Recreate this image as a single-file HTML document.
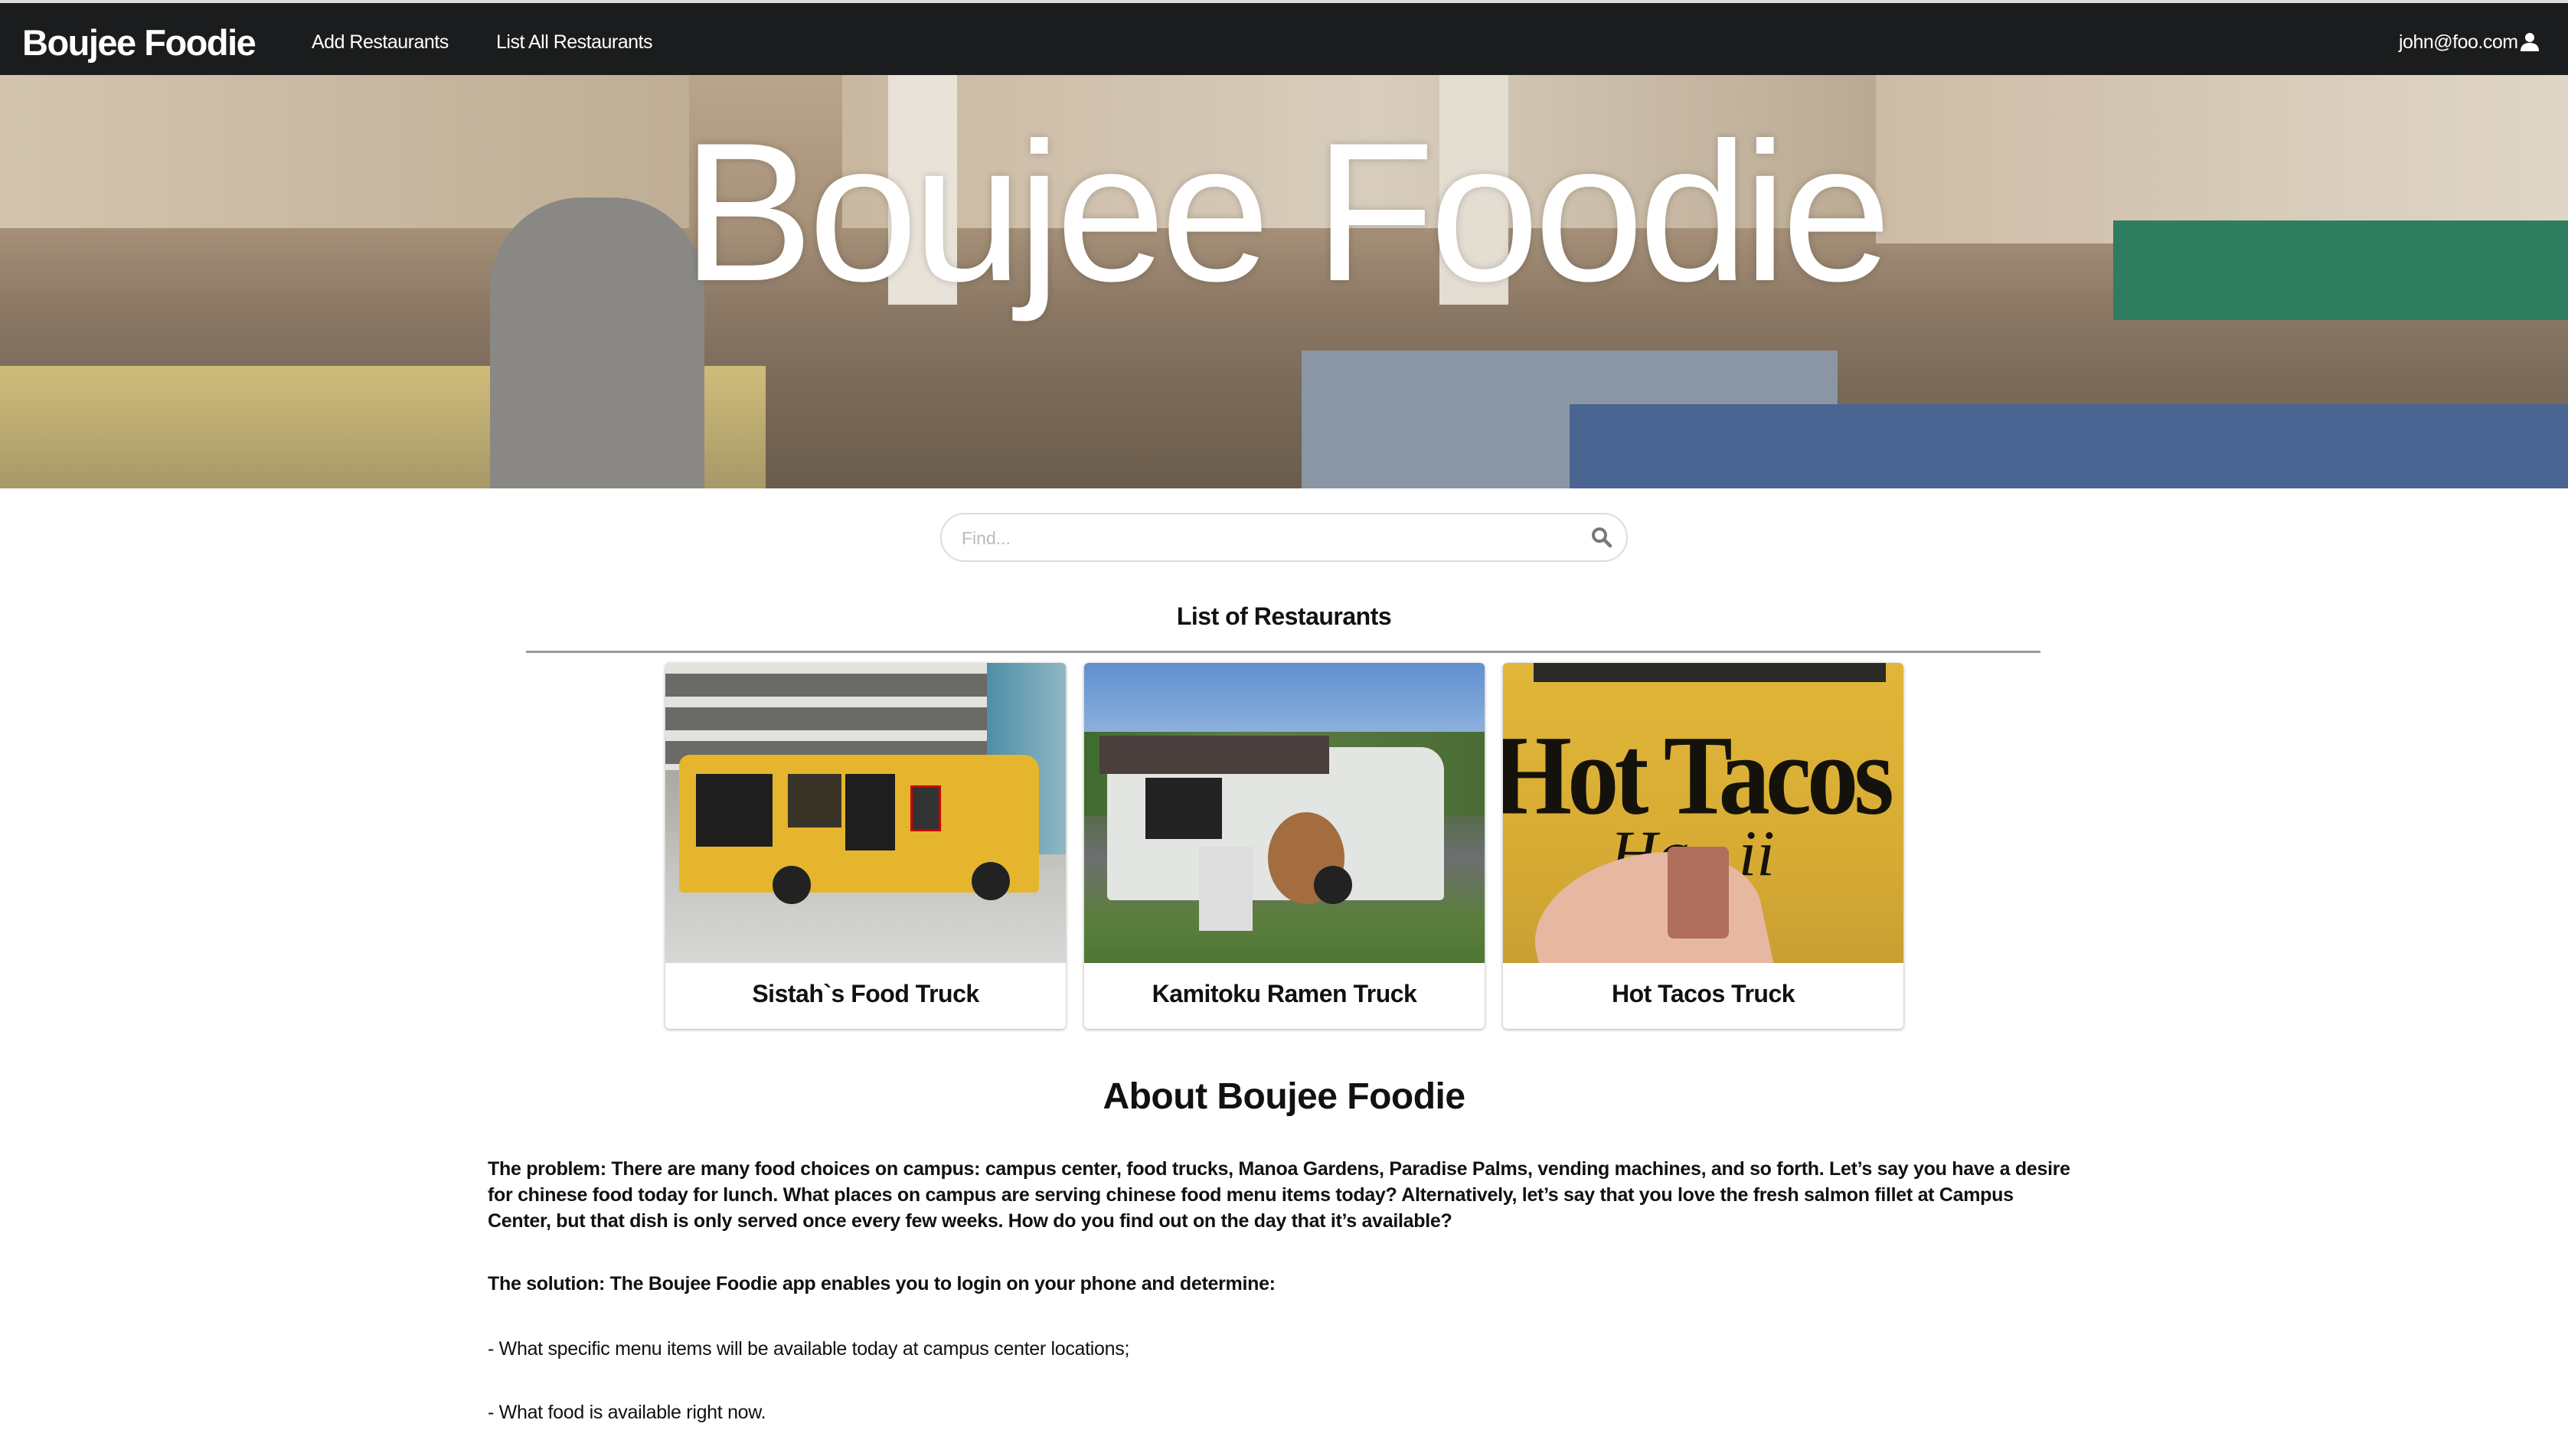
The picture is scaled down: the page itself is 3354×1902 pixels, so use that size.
<!DOCTYPE html>
<html><head><meta charset="utf-8"><style>
*{box-sizing:border-box;margin:0;padding:0}
body{width:3354px;height:1902px;overflow:hidden;background:#fff;font-family:"Liberation Sans",sans-serif;color:#111;position:relative}
.top{position:absolute;left:0;top:0;width:3354px;height:4px;background:#ddd}
.nav{position:absolute;left:0;top:4px;width:3354px;height:94px;background:#1b1c1d;color:#fff}
.nav .brand{position:absolute;left:29px;top:24px;font-size:47px;font-weight:bold;letter-spacing:-1.5px}
.nav .l{position:absolute;top:37px;font-size:25px;letter-spacing:-0.5px}
.hero{position:absolute;left:0;top:98px;width:3354px;height:540px;overflow:hidden;
background:linear-gradient(180deg,#b9a58c 0%,#a8927a 35%,#8d7a66 55%,#7a6a5a 75%,#6b5c4c 100%)}
.hero div{position:absolute}
.hero h1{position:absolute;left:0;width:100%;top:50px;text-align:center;color:#fff;font-size:258px;font-weight:normal;letter-spacing:-7px;line-height:1;text-shadow:0 0 10px rgba(0,0,0,.2)}
.search{position:absolute;left:1228px;top:670px;width:898px;height:64px;border:2px solid #ddd;border-radius:32px}
.search span{position:absolute;left:26px;top:18px;font-size:23px;color:#bbb}
.t1{position:absolute;left:0;width:3354px;top:787px;text-align:center;font-size:32px;font-weight:bold;letter-spacing:-0.5px}
.hr{position:absolute;left:687px;top:850px;width:1978px;height:3px;background:#999}
.card{position:absolute;top:866px;width:523px;height:478px;border-radius:6px;box-shadow:0 1px 4px rgba(0,0,0,.35);overflow:hidden;background:#fff}
.card .img{position:absolute;left:0;top:0;width:100%;height:392px;overflow:hidden}
.card .img div{position:absolute}
.card .n{position:absolute;left:0;width:100%;top:414px;text-align:center;font-size:32px;font-weight:bold;letter-spacing:-0.5px}
h2{position:absolute;left:0;width:3354px;top:1405px;text-align:center;font-size:48px;font-weight:bold;letter-spacing:-0.5px}
.p{position:absolute;left:637px;width:2300px;font-size:25px;line-height:34px;letter-spacing:-0.3px;white-space:nowrap}
</style></head><body>
<div class="top"></div>
<div class="nav"><div class="brand">Boujee Foodie</div>
<div class="l" style="left:407px">Add Restaurants</div>
<div class="l" style="left:648px">List All Restaurants</div>
<div class="l" style="left:3133px">john@foo.com<svg width="26" height="26" viewBox="0 0 26 26" style="vertical-align:-4px;margin-left:2px"><circle cx="13" cy="8" r="6" fill="#fff"/><path d="M1 26c0-8 5-11 12-11s12 3 12 11z" fill="#fff"/></svg></div></div>
<div class="hero">
<div style="left:0;top:0;width:900px;height:200px;background:linear-gradient(90deg,#d2c4ae,#bfae95)"></div>
<div style="left:1100px;top:0;width:1400px;height:200px;background:linear-gradient(90deg,#c9b8a0,#d8cdbd,#b8a78f)"></div>
<div style="left:2450px;top:0;width:904px;height:220px;background:linear-gradient(90deg,#ccbca6,#e0d6c8)"></div>
<div style="left:1160px;top:0;width:90px;height:300px;background:#e8e2d8"></div>
<div style="left:1880px;top:0;width:90px;height:300px;background:#e4ddd2"></div>
<div style="left:2760px;top:190px;width:594px;height:130px;background:#2f7d60"></div>
<div style="left:0;top:380px;width:1000px;height:160px;background:linear-gradient(180deg,#cfbd7a,#a89868)"></div>
<div style="left:640px;top:160px;width:280px;height:380px;border-radius:120px 120px 0 0;background:#8a8884"></div>
<div style="left:1700px;top:360px;width:700px;height:180px;background:#8a96a4"></div>
<div style="left:2050px;top:430px;width:1304px;height:110px;background:#4a6592"></div>
<h1>Boujee Foodie</h1>
</div>
<div class="search"><span>Find...</span><svg style="position:absolute;right:18px;top:16px" width="28" height="28" viewBox="0 0 28 28"><circle cx="11" cy="11" r="8" stroke="#777" stroke-width="4" fill="none"/><path d="M17 17l8 8" stroke="#777" stroke-width="4.5" stroke-linecap="round"/></svg></div>
<div class="t1">List of Restaurants</div>
<div class="hr"></div>

<div class="card" style="left:869px"><div class="img" style="background:linear-gradient(180deg,#8e8e8c 0%,#b5b3ad 50%,#c7c6c2 70%,#d7d7d5 100%)">
<div style="left:0;top:0;width:523px;height:140px;background:repeating-linear-gradient(180deg,#e4e2dc 0 14px,#6a6a66 14px 44px)"></div>
<div style="left:420px;top:0;width:103px;height:250px;background:linear-gradient(90deg,#4d8fa6,#8fb7c4)"></div>
<div style="left:18px;top:120px;width:470px;height:180px;border-radius:14px 20px 6px 6px;background:#e6b52e"></div>
<div style="left:40px;top:145px;width:100px;height:95px;background:#1e1e1e"></div>
<div style="left:160px;top:145px;width:70px;height:70px;background:#3a3328"></div>
<div style="left:235px;top:145px;width:65px;height:100px;background:#1e1e1e"></div>
<div style="left:320px;top:160px;width:40px;height:60px;background:#333;border:3px solid #c00"></div>
<div style="left:140px;top:265px;width:50px;height:50px;border-radius:50%;background:#222"></div>
<div style="left:400px;top:260px;width:50px;height:50px;border-radius:50%;background:#222"></div>
</div><div class="n">Sistah`s Food Truck</div></div>

<div class="card" style="left:1416px"><div class="img" style="background:linear-gradient(180deg,#5f8fd0 0%,#9bb9e0 30%,#4d6b3a 45%,#6d6f70 65%,#5b7e3c 85%,#4f7635 100%)">
<div style="left:0;top:90px;width:523px;height:110px;background:linear-gradient(90deg,#3f6b30,#5d7d45 40%,#4a6d35)"></div>
<div style="left:30px;top:110px;width:440px;height:200px;border-radius:6px 30px 6px 6px;background:#e2e5e2"></div>
<div style="left:20px;top:95px;width:300px;height:50px;background:#4a3f3c"></div>
<div style="left:80px;top:150px;width:100px;height:80px;background:#222"></div>
<div style="left:240px;top:195px;width:100px;height:120px;border-radius:50%;background:#a36d3f"></div>
<div style="left:150px;top:240px;width:70px;height:110px;background:#ddd"></div>
<div style="left:300px;top:265px;width:50px;height:50px;border-radius:50%;background:#222"></div>
</div><div class="n">Kamitoku Ramen Truck</div></div>

<div class="card" style="left:1963px"><div class="img" style="background:linear-gradient(180deg,#e0b63a,#d8ac33 60%,#c99f33)">
<div style="left:40px;top:0;width:460px;height:25px;background:#2b2a27"></div>
<div style="left:-15px;top:70px;white-space:nowrap;font-family:'Liberation Serif',serif;font-size:135px;font-weight:bold;color:#15120c;letter-spacing:-6px;transform:scaleY(1.1)">Hot Tacos</div>
<div style="left:140px;top:200px;white-space:nowrap;font-family:'Liberation Serif',serif;font-style:italic;font-size:85px;color:#15120c">Ha&nbsp;&nbsp;&nbsp;ii</div>
<div style="left:40px;top:250px;width:300px;height:190px;border-radius:50% 50% 0 0;background:#e6b8a2;transform:rotate(-12deg)"></div>
<div style="left:215px;top:240px;width:80px;height:120px;border-radius:8px;background:#b06e5c"></div>
</div><div class="n">Hot Tacos Truck</div></div>

<h2>About Boujee Foodie</h2>
<div class="p" style="top:1510px;font-weight:bold">The problem: There are many food choices on campus: campus center, food trucks, Manoa Gardens, Paradise Palms, vending machines, and so forth. Let’s say you have a desire<br>for chinese food today for lunch. What places on campus are serving chinese food menu items today? Alternatively, let’s say that you love the fresh salmon fillet at Campus<br>Center, but that dish is only served once every few weeks. How do you find out on the day that it’s available?</div>
<div class="p" style="top:1660px;font-weight:bold">The solution: The Boujee Foodie app enables you to login on your phone and determine:</div>
<div class="p" style="top:1745px">- What specific menu items will be available today at campus center locations;</div>
<div class="p" style="top:1828px">- What food is available right now.</div>
</body></html>
